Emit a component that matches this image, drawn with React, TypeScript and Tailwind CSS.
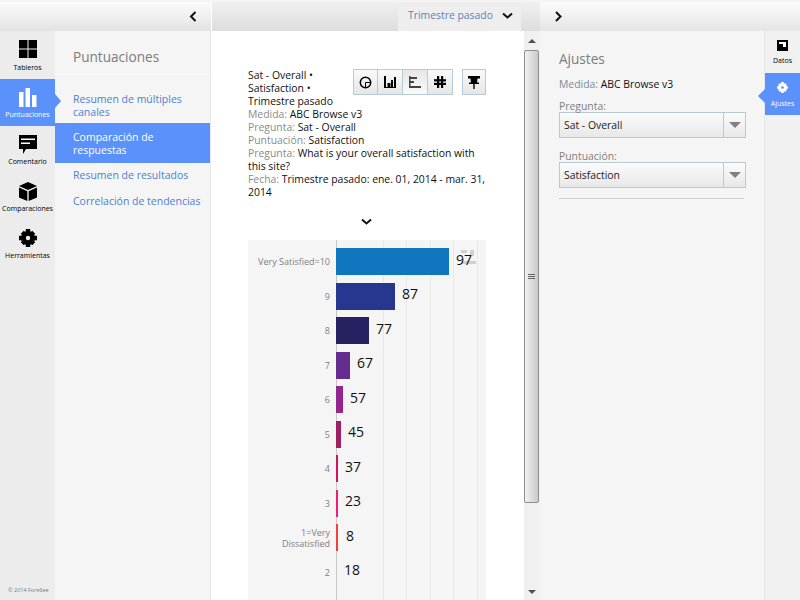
import type { ReactNode } from "react";

const font = "font-['Open_Sans','Liberation_Sans',sans-serif]";

const bars = [
  { label: "Very Satisfied=10", width: 113, value: 97, color: "bg-[#0f75bc]", gap: "ml-[7px]", wrap: "pl-0" },
  { label: "9", width: 59, value: 87, color: "bg-[#27368f]", gap: "ml-[7px]", wrap: "pl-0" },
  { label: "8", width: 33, value: 77, color: "bg-[#262262]", gap: "ml-[7px]", wrap: "pl-0" },
  { label: "7", width: 14, value: 67, color: "bg-[#662d91]", gap: "ml-[7px]", wrap: "pl-0" },
  { label: "6", width: 7, value: 57, color: "bg-[#93278f]", gap: "ml-[7px]", wrap: "pl-0" },
  { label: "5", width: 5, value: 45, color: "bg-[#9e1f63]", gap: "ml-[7px]", wrap: "pl-0" },
  { label: "4", width: 2, value: 37, color: "bg-[#d4145a]", gap: "ml-[7px]", wrap: "pl-0" },
  { label: "3", width: 2, value: 23, color: "bg-[#ed1e79]", gap: "ml-[7px]", wrap: "pl-0" },
  { label: "1=Very Dissatisfied", width: 2, value: 8, color: "bg-[#ef4136]", gap: "ml-[8px]", wrap: "pl-[20px]" },
  { label: "2", width: 0, value: 18, color: "bg-transparent", gap: "ml-[8px]", wrap: "pl-0" },
];

const gridLines = ["left-[135px]", "left-[158px]", "left-[182px]", "left-[205px]", "left-[229px]"];

function TablerosIcon() {
  return (
    <svg width="18" height="18" viewBox="0 0 18 18" fill="#000">
      <rect x="0" y="0" width="8.5" height="8.5" />
      <rect x="9.5" y="0" width="8.5" height="8.5" />
      <rect x="0" y="9.5" width="8.5" height="8.5" />
      <rect x="9.5" y="9.5" width="8.5" height="8.5" />
    </svg>
  );
}

function PuntuacionesIcon() {
  return (
    <svg width="18" height="19" viewBox="0 0 18 19" fill="#fff">
      <rect x="0" y="4" width="4.5" height="15" />
      <rect x="6.5" y="0" width="4.5" height="19" />
      <rect x="13" y="7" width="4.5" height="12" />
    </svg>
  );
}

function ComentarioIcon() {
  return (
    <svg width="18" height="19" viewBox="0 0 18 19">
      <path d="M0 0H18V14H7L4 19V14H0Z" fill="#000" />
      <rect x="2" y="3.5" width="14" height="1.5" fill="#fff" />
      <rect x="2" y="7.5" width="9" height="1.5" fill="#fff" />
    </svg>
  );
}

function ComparacionesIcon() {
  return (
    <svg width="18" height="19" viewBox="0 0 18 19" fill="#000">
      <path d="M9 0L18 4L9 8L0 4Z" />
      <path d="M0 5.5L8.3 9.2V19L0 15.5Z" />
      <path d="M18 5.5L9.7 9.2V19L18 15.5Z" />
    </svg>
  );
}

function GearIcon({ fill, hole, size }: { fill: string; hole: string; size: number }) {
  return (
    <svg width={size} height={size} viewBox="0 0 18 18">
      <circle cx="9" cy="9" r="7" fill={fill} />
      <path
        d="M6.8 0H11.2V3H6.8ZM6.8 15H11.2V18H6.8ZM0 6.8H3V11.2H0ZM15 6.8H18V11.2H15ZM1.8 4.8L4.8 1.8L7 4L4 7ZM13.2 1.8L16.2 4.8L14 7L11 4ZM1.8 13.2L4 11L7 14L4.8 16.2ZM14 11L16.2 13.2L13.2 16.2L11 14Z"
        fill={fill}
      />
      <circle cx="9" cy="9" r="2.2" fill={hole} />
    </svg>
  );
}

function DatosIcon() {
  return (
    <svg width="11" height="11" viewBox="0 0 11 11">
      <rect width="11" height="11" fill="#000" />
      <rect x="2" y="2" width="7" height="2" fill="#fff" />
      <rect x="6" y="4" width="3" height="3" fill="#fff" />
    </svg>
  );
}

function Chevron({ dir, className }: { dir: "left" | "right" | "down"; className?: string }) {
  const d = dir === "left" ? "M6.5 1L2 5.5L6.5 10" : dir === "right" ? "M2 1L6.5 5.5L2 10" : "M1 1.5L5.5 5.5L10 1.5";
  return (
    <svg width={dir === "down" ? 11 : 8} height={dir === "down" ? 8 : 11} viewBox={dir === "down" ? "0 0 11 8" : "0 0 8 11"} className={className}>
      <path d={d} fill="none" stroke="#111" strokeWidth="2" />
    </svg>
  );
}

function RailItem({
  label,
  icon,
  active,
  h = "h-[47px]",
  labelGap = "mt-[3px]",
}: {
  label: string;
  icon: ReactNode;
  active?: boolean;
  h?: string;
  labelGap?: string;
}) {
  return (
    <div className={`flex ${h} flex-col items-center pt-[8px] ${active ? "bg-[#5b91fb] text-white" : "text-black"}`}>
      <div className="flex h-[20px] items-center">{icon}</div>
      <span className={`${labelGap} whitespace-nowrap text-[7px] leading-[10px]`}>{label}</span>
    </div>
  );
}

function ToolButton({ children, active, className }: { children: ReactNode; active?: boolean; className?: string }) {
  return (
    <div className={`flex h-[26px] items-center justify-center border border-[#b7cbd6] ${active ? "bg-gradient-to-b from-[#e6e6e6] to-[#fafafa]" : "bg-gradient-to-b from-[#fafafa] to-[#e6e6e6]"} ${className ?? ""}`}>
      {children}
    </div>
  );
}

function Select({ value }: { value: string }) {
  return (
    <div className="flex h-[26px] w-[187px] items-center border border-[#b7c9d3] bg-gradient-to-b from-[#fbfbfb] to-[#e8e8e8]">
      <span className="flex-1 pl-[4px] pt-[2px] text-[10.4px] text-[#222]">{value}</span>
      <div className="flex h-full w-[22px] items-center justify-center border-l border-[#b7c9d3]">
        <div className="h-0 w-0 border-x-[6px] border-t-[6px] border-x-transparent border-t-[#808080]" />
      </div>
    </div>
  );
}

function Meta({ label, children }: { label: string; children: ReactNode }) {
  return (
    <div>
      <span className="text-[#8a8a8a]">{label}: </span>
      {children}
    </div>
  );
}

export default function App() {
  return (
    <div className={`flex h-[600px] w-[800px] flex-col overflow-hidden bg-white ${font}`}>
      <header className="flex h-[31px] shrink-0 border-t-2 border-[#f4f4f4]">
        <div className="flex w-[211px] items-center justify-end bg-gradient-to-b from-[#fbfbfb] to-[#e3e3e3] pr-[14px]">
          <Chevron dir="left" />
        </div>
        <div className="ml-px flex flex-1 justify-end bg-gradient-to-b from-[#f0f0f0] to-[#dddddd] pr-[19px]">
          <div className="flex h-[29px] w-[123px] items-center bg-[#eeeeee] pl-[10px] pb-[2px]">
            <span className="text-[10.4px] text-[#5f7fb8]">Trimestre pasado</span>
            <Chevron dir="down" className="ml-[9px]" />
          </div>
        </div>
        <div className="flex w-[260px] items-center bg-gradient-to-b from-[#fbfbfb] to-[#e5e5e5] pl-[14px]">
          <Chevron dir="right" />
        </div>
      </header>

      <div className="flex min-h-0 flex-1">
        {/* left rail */}
        <nav className="flex w-[55px] shrink-0 flex-col bg-[#ececec]">
          <RailItem label="Tableros" h="h-[48px]" labelGap="mt-[4px]" icon={<TablerosIcon />} />
          <div className="relative">
            <RailItem label="Puntuaciones" active icon={<PuntuacionesIcon />} />
            <div className="absolute left-full top-[15px] h-0 w-0 border-y-[7px] border-l-[6px] border-y-transparent border-l-[#5b91fb]" />
          </div>
          <RailItem label="Comentario" icon={<ComentarioIcon />} />
          <RailItem label="Comparaciones" icon={<ComparacionesIcon />} />
          <RailItem label="Herramientas" icon={<GearIcon fill="#000" hole="#ececec" size={18} />} />
          <div className="mt-auto pb-[6px] pl-[8px] text-[5.5px] leading-[8px] text-[#7a7a7a]">© 2014 ForeSee</div>
        </nav>

        {/* section menu */}
        <aside className="w-[156px] shrink-0 border-r border-[#e8e8e8] bg-[#f5f5f5]">
          <div className="h-[44px] border-b border-white pl-[18px] pt-[16px] text-[13.6px] leading-[20px] text-[#7b7b7b]">Puntuaciones</div>
          <ul className="text-[10.5px] leading-[13px] text-[#4f7fd0]">
            <li className="pl-[18px] pr-[5px] pt-[18px] pb-[4px]">Resumen de múltiples canales</li>
            <li className="bg-[#5b91fb] pl-[18px] pr-[5px] pt-[8px] pb-[6px] text-white">Comparación de respuestas</li>
            <li className="pl-[18px] pr-[5px] pt-[6px] pb-[7px]">Resumen de resultados</li>
            <li className="pl-[18px] pr-[5px] py-[6px]">Correlación de tendencias</li>
          </ul>
        </aside>

        {/* main */}
        <main className="flex min-w-0 flex-1">
          <div className="w-[313px] shrink-0 overflow-hidden pl-[37px] pt-[38px]">
            <div className="w-[238px] text-[10.4px] leading-[13px] text-[#111]">
              <div className="float-right flex gap-[9px]">
                <div className="flex">
                  <ToolButton className="w-[25px]">
                    <svg width="13" height="13" viewBox="0 0 13 13">
                      <circle cx="6.5" cy="6.5" r="5.2" fill="none" stroke="#000" strokeWidth="1.5" />
                      <path d="M6.5 6.5H12M6.5 6.5V12" stroke="#000" strokeWidth="1" />
                    </svg>
                  </ToolButton>
                  <ToolButton className="-ml-px w-[26px]">
                    <svg width="12" height="12" viewBox="0 0 12 12" fill="#000">
                      <rect x="0" y="0" width="2" height="12" />
                      <rect x="3.5" y="7" width="3" height="5" />
                      <rect x="7" y="4" width="2" height="8" />
                      <rect x="10" y="1" width="2" height="11" />
                      <rect x="0" y="11" width="12" height="1" />
                    </svg>
                  </ToolButton>
                  <ToolButton active className="-ml-px w-[26px]">
                    <svg width="12" height="12" viewBox="0 0 12 12" fill="#444">
                      <rect x="0" y="0" width="1.5" height="12" />
                      <rect x="0" y="1" width="8" height="2" />
                      <rect x="0" y="5" width="5" height="2" />
                      <rect x="0" y="10" width="12" height="2" />
                    </svg>
                  </ToolButton>
                  <ToolButton className="-ml-px w-[26px]">
                    <svg width="12" height="12" viewBox="0 0 12 12" fill="#000">
                      <rect x="3" y="0" width="2.2" height="12" />
                      <rect x="7" y="0" width="2.2" height="12" />
                      <rect x="0" y="3.2" width="12" height="2.2" />
                      <rect x="0" y="6.8" width="12" height="2.2" />
                    </svg>
                  </ToolButton>
                </div>
                <ToolButton className="w-[24px]">
                  <svg width="12" height="13" viewBox="0 0 12 13" fill="#000">
                    <path d="M0 0H12V2.5H9.5L9 6.5H11V8H1V6.5H3L2.5 2.5H0Z" />
                    <rect x="5.3" y="8" width="1.4" height="5" />
                  </svg>
                </ToolButton>
              </div>
              <div>Sat - Overall • Satisfaction • Trimestre pasado</div>
              <Meta label="Medida">ABC Browse v3</Meta>
              <Meta label="Pregunta">Sat - Overall</Meta>
              <Meta label="Puntuación">Satisfaction</Meta>
              <Meta label="Pregunta">What is your overall satisfaction with this site?</Meta>
              <Meta label="Fecha">Trimestre pasado: ene. 01, 2014 - mar. 31, 2014</Meta>
            </div>

            <div className="mt-[19px] flex w-[238px] justify-center">
              <Chevron dir="down" className="-ml-[2px]" />
            </div>

            {/* chart */}
            <div className="relative mt-[14px] w-[238px] bg-[#f5f5f5] pb-[20px] pt-[8px]">
              <div className="absolute bottom-[6px] left-[88px] top-0 w-px bg-[#c8c8c8]" />
              {gridLines.map((pos) => (
                <div key={pos} className={`absolute bottom-[6px] top-0 w-px bg-[#e8e8e8] ${pos}`} />
              ))}
              <svg width="15" height="15" viewBox="0 0 15 15" className="absolute left-[213px] top-[10px]" fill="#d0d0d0">
                <rect x="0" y="0" width="6" height="3" />
                <rect x="9" y="0" width="4" height="6" />
                <rect x="0" y="11" width="15" height="3" />
              </svg>
              {bars.map((bar) => (
                <div key={bar.label} className="relative mb-[7.5px] flex h-[27px] items-center">
                  <div className={`w-[82px] shrink-0 text-right text-[9px] leading-[11px] text-[#808080] ${bar.wrap}`}>{bar.label}</div>
                  <div className="ml-[6px] flex h-full items-center">
                    <div className={`h-full ${bar.color}`} style={{ width: bar.width }} />
                    <span className={`${bar.gap} pb-[4px] text-[14px] leading-[20px] text-[#111]`}>{bar.value}</span>
                  </div>
                </div>
              ))}
            </div>
          </div>

          {/* scrollbar */}
          <div className="flex w-[16px] shrink-0 flex-col bg-[#f0f0f0]">
            <div className="flex h-[19px] items-center justify-center">
              <div className="h-0 w-0 border-x-[4px] border-b-[4px] border-x-transparent border-b-[#505050]" />
            </div>
            <div className="flex h-[453px] w-[15px] flex-col items-center justify-center gap-px rounded-[2px] border border-[#8f8f8f] bg-gradient-to-r from-[#f2f2f2] to-[#c8c8c8]">
              <div className="h-px w-[7px] bg-[#666]" />
              <div className="h-px w-[7px] bg-[#666]" />
              <div className="h-px w-[7px] bg-[#666]" />
            </div>
            <div className="mt-auto flex h-[16px] items-center justify-center">
              <div className="h-0 w-0 border-x-[4px] border-t-[4px] border-x-transparent border-t-[#505050]" />
            </div>
          </div>

          {/* settings */}
          <section className="w-[225px] shrink-0 border-r border-[#e6e6e6] bg-[#f5f5f5] px-[19px] pt-[18px]">
            <h2 className="text-[13.6px] font-normal leading-[20px] text-[#7b7b7b]">Ajustes</h2>
            <div className="mt-[8px] text-[10.4px] leading-[14px] text-[#111]">
              <span className="text-[#7d8a96]">Medida: </span>ABC Browse v3
            </div>
            <label className="mt-[9px] block text-[10.4px] leading-[12px] text-[#808080]">Pregunta:</label>
            <Select value="Sat - Overall" />
            <label className="mt-[12px] block text-[10.4px] leading-[12px] text-[#808080]">Puntuación:</label>
            <Select value="Satisfaction" />
            <div className="mt-[10px] h-px w-[185px] bg-[#cfcfcf]" />
          </section>

          {/* right rail */}
          <nav className="w-[35px] shrink-0 bg-[#f1f1f1]">
            <div className="flex h-[42px] flex-col items-center pt-[9px] text-black">
              <DatosIcon />
              <span className="mt-[5px] text-[7px] leading-[10px]">Datos</span>
            </div>
            <div className="relative flex h-[42px] flex-col items-center bg-[#5b91fb] pt-[9px] text-white">
              <GearIcon fill="#fff" hole="#5b91fb" size={11} />
              <span className="mt-[6px] text-[7px] leading-[10px]">Ajustes</span>
              <div className="absolute right-full top-[16px] h-0 w-0 border-y-[7px] border-r-[7px] border-y-transparent border-r-[#5b91fb]" />
            </div>
          </nav>
        </main>
      </div>
    </div>
  );
}
